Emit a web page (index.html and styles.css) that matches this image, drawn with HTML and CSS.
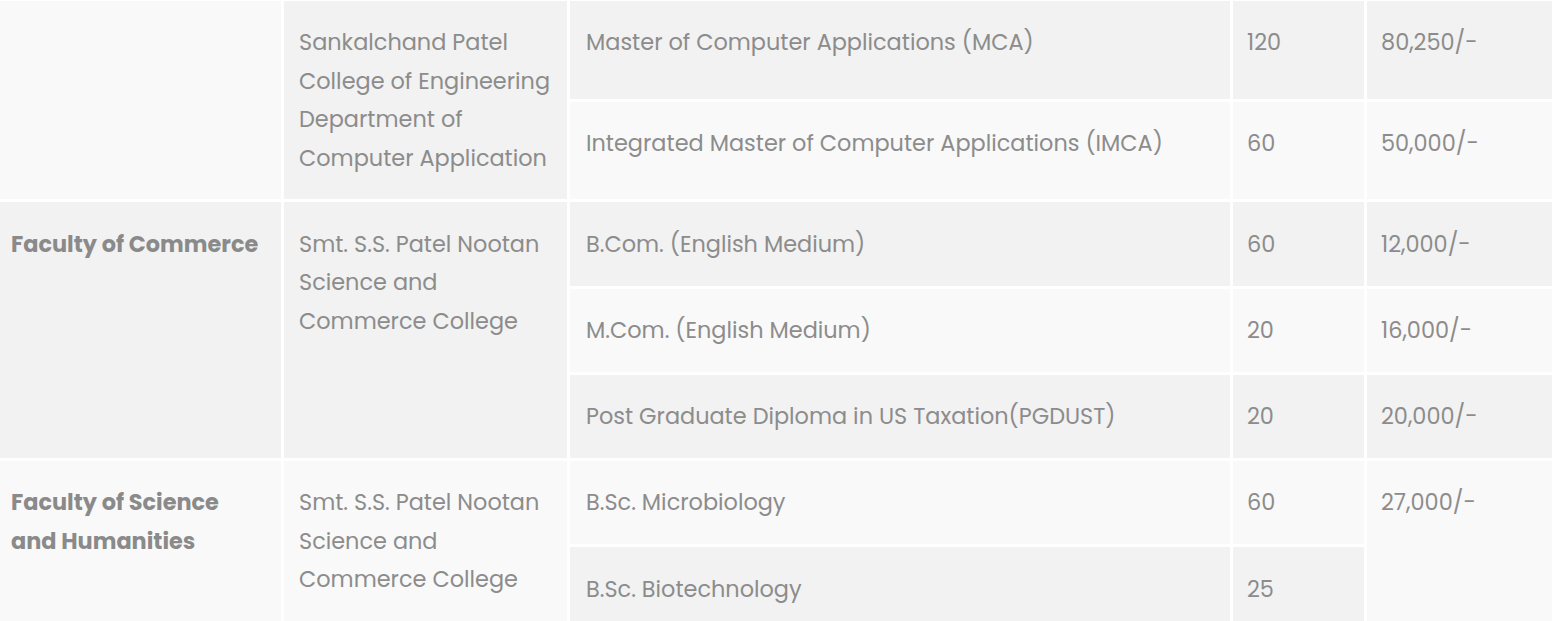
FILE: index.html
```html
<!DOCTYPE html>
<html lang="en">
<head>
<meta charset="utf-8">
<title>Fee Structure</title>
<link rel="stylesheet" href="styles.css">
</head>
<body>
<div class="wrap">
  <table class="fees">
    <colgroup>
      <col class="c-faculty">
      <col class="c-college">
      <col class="c-program">
      <col class="c-intake">
      <col class="c-fee">
    </colgroup>
    <tbody>
      <tr>
        <td class="faculty cont" rowspan="2"></td>
        <td class="college" rowspan="2">Sankalchand Patel College of Engineering Department of Computer Application</td>
        <td>Master of Computer Applications (MCA)</td>
        <td class="num">120</td>
        <td class="num">80,250/-</td>
      </tr>
      <tr>
        <td>Integrated Master of Computer Applications (IMCA)</td>
        <td class="num">60</td>
        <td class="num">50,000/-</td>
      </tr>
      <tr>
        <td class="faculty" rowspan="3">Faculty of Commerce</td>
        <td class="college" rowspan="3">Smt. S.S. Patel Nootan Science and Commerce College</td>
        <td>B.Com. (English Medium)</td>
        <td class="num">60</td>
        <td class="num">12,000/-</td>
      </tr>
      <tr>
        <td>M.Com. (English Medium)</td>
        <td class="num">20</td>
        <td class="num">16,000/-</td>
      </tr>
      <tr>
        <td>Post Graduate Diploma in US Taxation(PGDUST)</td>
        <td class="num">20</td>
        <td class="num">20,000/-</td>
      </tr>
      <tr>
        <td class="faculty" rowspan="2">Faculty of Science and Humanities</td>
        <td class="college" rowspan="2">Smt. S.S. Patel Nootan Science and Commerce College</td>
        <td>B.Sc. Microbiology</td>
        <td class="num">60</td>
        <td class="num" rowspan="2">27,000/-</td>
      </tr>
      <tr>
        <td>B.Sc. Biotechnology</td>
        <td class="num">25</td>
      </tr>
    </tbody>
  </table>
</div>
</body>
</html>
```

FILE: styles.css
```css
html, body {
  margin: 0;
  padding: 0;
  background: #ffffff;
}

.wrap {
  width: 100%;
  height: 621px;
  overflow: hidden;
}

.fees {
  table-layout: fixed;
  width: 1578px;
  margin: -2px 0 0 -8px;
  border-collapse: separate;
  border-spacing: 3px;
  font-family: Poppins, "Open Sans", sans-serif;
  font-size: 22.4px;
  line-height: 38.4px;
  color: #8c8c8c;
}

.c-faculty { width: 286px; }
.c-college { width: 283px; }
.c-program { width: 660px; }
.c-intake { width: 131px; }
.c-fee { width: 200px; }

.fees td {
  box-sizing: border-box;
  vertical-align: top;
  text-align: left;
  padding: 22.4px 16px;
  background: #f9f9f9;
}

.fees td.college {
  padding-left: 15px;
  padding-right: 10px;
}

.fees td.num {
  padding-left: 14px;
}

.fees tr:nth-child(odd) td {
  background: #f2f2f2;
}

.fees tr:nth-child(odd) td.cont {
  background: #f9f9f9;
}

.fees td.faculty {
  font-weight: 700;
  color: #8a8a8a;
}
```
